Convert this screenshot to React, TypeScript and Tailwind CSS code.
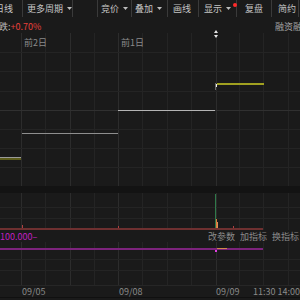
import React from "react";

const FONT = { fontFamily: '"Noto Sans CJK SC", "Noto Sans", sans-serif' };

const vMajor = [21.5, 70.5, 118.5, 216.5];
const vMinor = [45.5, 94.5, 142.5, 167.5, 191.5, 239.5, 263.5, 288.5];

const Caret = () => (
  <svg width="5" height="3" viewBox="0 0 5 3" className="ml-[4px] shrink-0">
    <path d="M0 0 L5 0 L2.5 3 Z" fill="#bdbdbd" />
  </svg>
);

const Divider = () => <div className="h-[17px] w-px shrink-0 bg-[#3a3a3a]" />;

const ToolItem = ({ w, pl, children }: { w: string; pl: string; children: React.ReactNode }) => (
  <div className={`flex h-[17px] shrink-0 items-center whitespace-nowrap ${w} ${pl}`}>{children}</div>
);

const Grid = ({ h, rows }: { h: number; rows: number[] }) => (
  <>
    {vMinor.map((x) => (
      <line key={"m" + x} x1={x} x2={x} y1={0} y2={h} stroke="#242424" />
    ))}
    {vMajor.map((x) => (
      <line key={"M" + x} x1={x} x2={x} y1={0} y2={h} stroke="#2c2c2c" />
    ))}
    {rows.map((y) => (
      <line key={"r" + y} x1={0} x2={300} y1={y} y2={y} stroke="#242424" />
    ))}
  </>
);

export default function App() {
  return (
    <div className="relative h-[300px] w-[300px] overflow-hidden bg-[#1a1a1a] text-[#c4c4c4]" style={FONT}>
      {/* toolbar */}
      <div className="flex h-[19px] items-start overflow-hidden text-[9px] leading-none">
        <ToolItem w="w-[22px]" pl="pl-0">
          <span className="-ml-[5px]">日线</span>
        </ToolItem>
        <Divider />
        <ToolItem w="w-[49px]" pl="pl-[4px]">
          更多周期
          <Caret />
        </ToolItem>
        <Divider />
        <div className="w-[24px] shrink-0" />
        <Divider />
        <ToolItem w="w-[33px]" pl="pl-[3px]">
          竞价
          <Caret />
        </ToolItem>
        <Divider />
        <ToolItem w="w-[35px]" pl="pl-[3px]">
          叠加
          <Caret />
        </ToolItem>
        <Divider />
        <ToolItem w="w-[30px]" pl="pl-[5px]">
          画线
        </ToolItem>
        <Divider />
        <ToolItem w="w-[37px]" pl="pl-[5px]">
          <span className="relative flex items-center">
            显示
            <Caret />
            <span className="absolute -right-[6px] top-[-1px] h-[4px] w-[4px] rounded-full bg-[#ff2a2a]" />
          </span>
        </ToolItem>
        <Divider />
        <ToolItem w="w-[34px]" pl="pl-[8px]">
          复盘
        </ToolItem>
        <Divider />
        <ToolItem w="w-[26px]" pl="pl-[6px]">
          简约
        </ToolItem>
        <Divider />
      </div>

      {/* info row */}
      <div className="flex h-[14px] items-center justify-between text-[9px] leading-none">
        <span className="-ml-[1px] whitespace-nowrap">
          <span className="text-[#bdbdbd]">跌:</span>
          <span className="text-[#e8403a]">+0.70%</span>
        </span>
        <span className="w-[25px] overflow-hidden whitespace-nowrap text-[#a8a8a8]">融资融券</span>
      </div>

      {/* main chart */}
      <div className="relative h-[153px]">
        <svg width="300" height="153" className="absolute left-0 top-0" shapeRendering="crispEdges">
          <Grid h={153} rows={[19.5, 38.5, 58.5, 96.5, 115.5, 134.5]} />
          <line x1={0} x2={300} y1={77.5} y2={77.5} stroke="#303030" />
          <line x1={0} x2={21} y1={124.5} y2={124.5} stroke="#9a9a9a" />
          <rect x={0} y={125} width={21} height={2} fill="#5c5c1c" />
          <line x1={22} x2={118} y1={100.5} y2={100.5} stroke="#8e8e8e" />
          <line x1={118} x2={215} y1={77.5} y2={77.5} stroke="#b4b4b4" />
          <rect x={217} y={50} width={47} height={2} fill="#a0a020" />
          <rect x={215} y={50} width={1} height={7} fill="#6a6a6a" />
          <rect x={216} y={51} width={1} height={3} fill="#f0f0f0" />
        </svg>
        <span className="absolute left-[24px] top-[5px] text-[9px] leading-none text-[#8a8a8a]">前2日</span>
        <span className="absolute left-[121px] top-[5px] text-[9px] leading-none text-[#8a8a8a]">前1日</span>
        <svg width="4" height="8" viewBox="0 0 4 8" className="absolute left-[214px] top-[-3px]">
          <path d="M2 0 L4 3 L0 3 Z M2 8 L4 5 L0 5 Z" fill="#e6e6e6" />
        </svg>
      </div>

      {/* separator band */}
      <div className="h-[7px] bg-[#131313]" />

      {/* volume */}
      <div className="relative h-[37px]">
        <svg width="300" height="37" className="absolute left-0 top-0" shapeRendering="crispEdges">
          <Grid h={37} rows={[14.5, 25.5]} />
          <rect x={0} y={35} width={263} height={2} fill="#6e3030" />
          <rect x={22} y={32} width={1} height={3} fill="#b04040" />
          <rect x={118} y={33} width={1} height={2} fill="#b04040" />
          <rect x={233} y={33} width={1} height={2} fill="#b04040" />
          <rect x={215} y={1} width={1} height={34} fill="#2f7a4a" />
          <rect x={216} y={26} width={1} height={9} fill="#e07a3a" />
          <rect x={217} y={29} width={1} height={6} fill="#e0905a" />
        </svg>
      </div>

      {/* indicator header */}
      <div className="flex h-[12px] items-center justify-between text-[9px] leading-none">
        <span className="text-[#c020c0]">100.000–</span>
        <div className="flex gap-[5px] pr-[1px] text-[#8a8a8a]">
          <span>改参数</span>
          <span>加指标</span>
          <span>换指标</span>
        </div>
      </div>

      {/* indicator */}
      <div className="relative h-[43px]">
        <svg width="300" height="43" className="absolute left-0 top-0" shapeRendering="crispEdges">
          <Grid h={43} rows={[17.5, 28.5]} />
          <rect x={0} y={6} width={263} height={2} fill="#7c237c" />
          <rect x={215} y={8} width={2} height={2} fill="#e040e0" />
          <rect x={217} y={6} width={10} height={1} fill="#d08a4a" />
        </svg>
      </div>

      {/* date axis */}
      <div className="relative h-[12px] border-t border-[#262626] text-[9px] leading-none text-[#8a8a8a]">
        <span className="absolute left-[22px] top-[1px]">09/05</span>
        <span className="absolute left-[119px] top-[1px]">09/08</span>
        <span className="absolute left-[216px] top-[1px]">09/09</span>
        <span className="absolute left-[253px] top-[1px] whitespace-nowrap">11:30 14:00</span>
      </div>
      <div className="h-px bg-[#101010]" />
    </div>
  );
}
